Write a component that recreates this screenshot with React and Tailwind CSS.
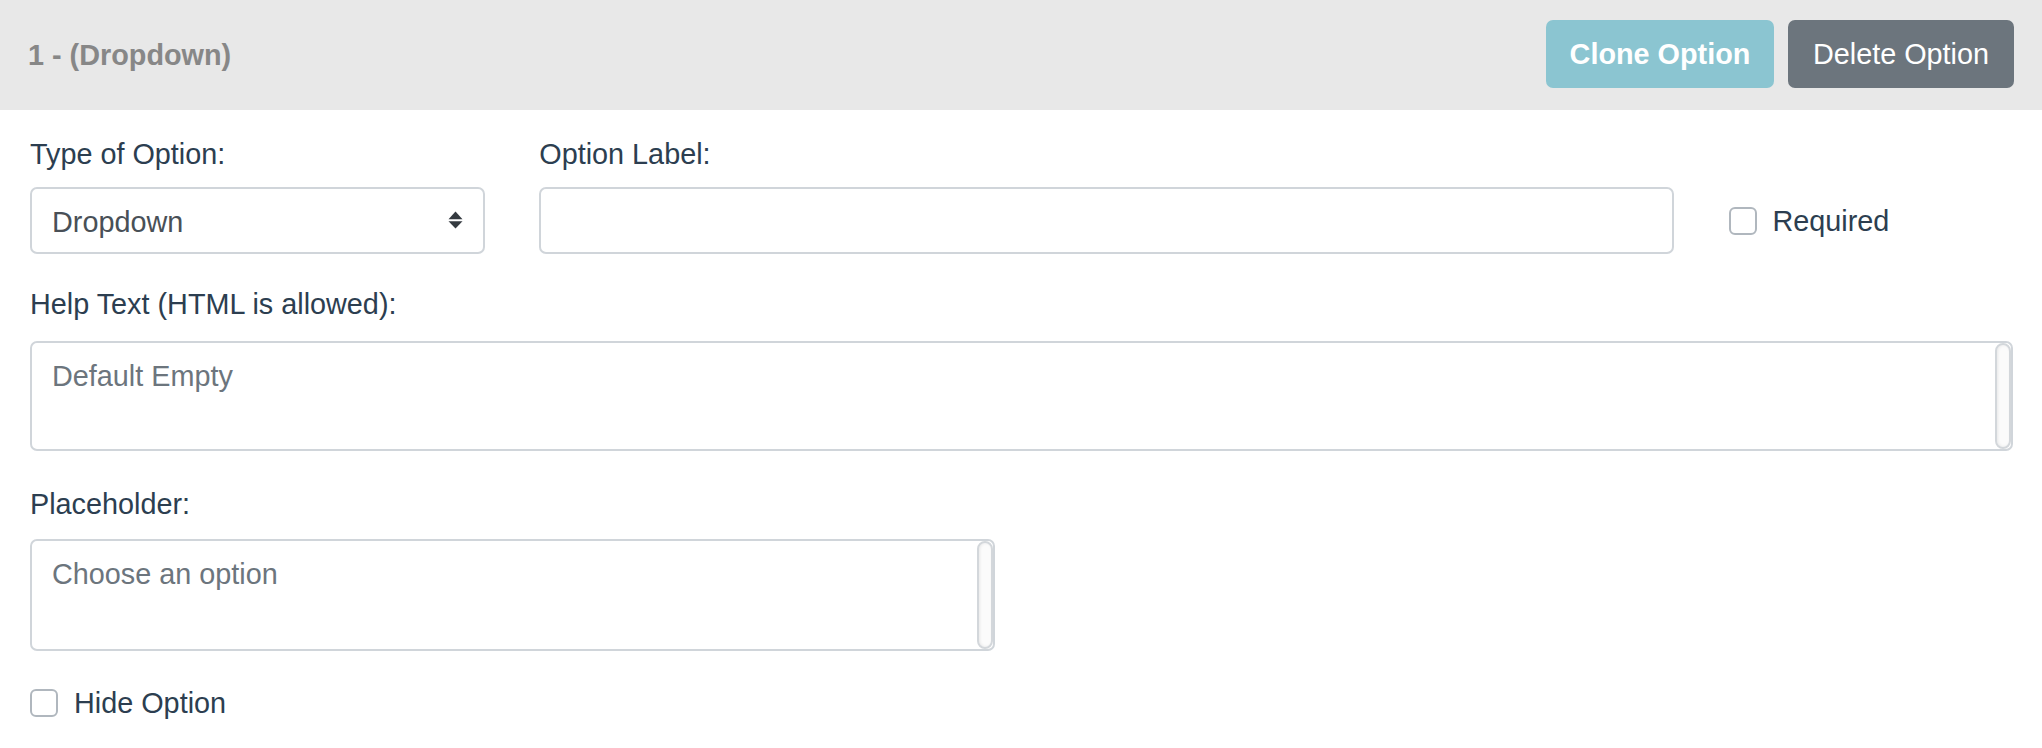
export default function App() {
  const field = "border-2 border-[#d0d5da] rounded-[7px] bg-white";
  const pill =
    "absolute top-0 bottom-0 right-0 w-[16px] rounded-[8px] border-2 border-[#d3d7db] bg-[#fbfbfb] shadow-[inset_1px_0_3px_rgba(0,0,0,0.08)]";
  const box = "w-[28px] h-[28px] shrink-0 border-2 border-[#b0b7be] rounded-[6px] bg-white";
  return (
    <div className="w-[2042px] min-h-[748px] bg-white font-['Liberation_Sans',Arial,Helvetica,sans-serif] text-[#2c3e50] text-[28.8px] leading-[43.2px]">
      <div className="h-[110px] bg-[#e8e8e8] flex items-center justify-between pl-[28px] pr-[28px] pb-[2px]">
        <div className="font-bold text-[#878787] mt-[3px]">1 - (Dropdown)</div>
        <div className="flex gap-[14px]">
          <button className="w-[228px] h-[68px] pt-[2px] rounded-[7px] bg-[#8bc5d1] text-white font-bold">
            Clone Option
          </button>
          <button className="w-[226px] h-[68px] pt-[2px] rounded-[7px] bg-[#6c757d] text-white">
            Delete Option
          </button>
        </div>
      </div>

      <div className="pl-[30px] pr-[29px] pt-[23px] pb-[20px]">
        <div className="grid grid-cols-12 gap-x-[54px]">
          <div className="col-span-3">
            <label className="block mb-[10.5px]">Type of Option:</label>
            <div
              className={`${field} h-[67px] flex items-center justify-between pl-[20px] pr-[20px] pt-[4px] text-[#495057]`}
            >
              <span>Dropdown</span>
              <svg width="15" height="18" viewBox="0 0 15 18" className="-mt-[4px]">
                <path d="M7.5 0.5 L14.5 8.3 H0.5 Z" fill="#343a40" />
                <path d="M0.5 10.2 H14.5 L7.5 17.5 Z" fill="#343a40" />
              </svg>
            </div>
          </div>
          <div className="col-span-7">
            <label className="block mb-[10.5px]">Option Label:</label>
            <div className={`${field} mt-[1.7px] h-[67px]`}></div>
          </div>
          <div className="col-span-2 flex items-end">
            <label className="h-[67px] flex items-center gap-[16px] pl-[1px] pt-[1px]">
              <span className={box}></span>
              <span className="pt-[1px]">Required</span>
            </label>
          </div>
        </div>

        <div className="mt-[29px]">
          <label className="block mb-[15px]">Help Text (HTML is allowed):</label>
          <div className={`${field} relative h-[110px] pl-[20px] pt-[12px] text-[#6c757d]`}>
            Default Empty
            <div className={pill}></div>
          </div>
        </div>

        <div className="mt-[32px] grid grid-cols-12 gap-x-[54px]">
          <div className="col-span-6">
            <label className="block mb-[12.5px]">Placeholder:</label>
            <div className={`${field} relative h-[112px] pl-[20px] pt-[12px] text-[#6c757d]`}>
              Choose an option
              <div className={pill}></div>
            </div>
          </div>
        </div>

        <label className="mt-[30.5px] h-[43.2px] flex items-center gap-[16px]">
          <span className={box}></span>
          <span className="pt-[1px]">Hide Option</span>
        </label>
      </div>
    </div>
  );
}
